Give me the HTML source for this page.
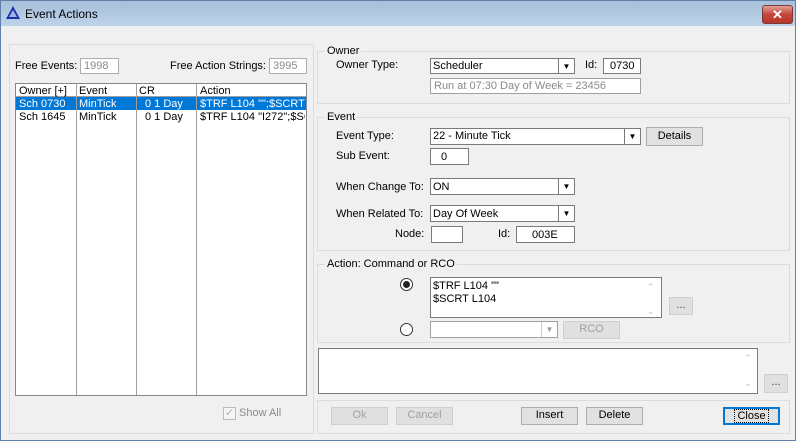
<!DOCTYPE html>
<html><head><style>
*{box-sizing:border-box;margin:0;padding:0}
body{width:800px;height:443px;background:#fbfbfb;font-family:"Liberation Sans",sans-serif;font-size:11px;color:#000;position:relative;overflow:hidden}
.a{position:absolute}
.win{left:0;top:0;width:796px;height:441px;background:#f0f0f0;border:1px solid #5e7fa8}
.title{left:1px;top:1px;width:794px;height:25px;background:linear-gradient(#a7bfdb,#bdd3ea)}
.t{white-space:nowrap;line-height:13px}
.grp{border:1px solid #dcdcdc}
.box{background:#fff;border:1px solid #7a7a7a}
.dis{color:#8a8a8a}
.btn{background:#e1e1e1;border:1px solid #adadad;text-align:center;line-height:15px}
.btnd{background:#e0e0e0;border:1px solid #cfcfcf;color:#a0a0a0;text-align:center;line-height:15px}
.arr{position:absolute;right:0;top:0;width:16px;height:100%;border-left:1px solid #7a7a7a;background:#fff;font-size:8px;text-align:center;line-height:15px}
.lbl{background:#f0f0f0;padding:0 2px}
</style></head><body>
<div class="a win"></div>
<div class="a title"></div>
<svg class="a" style="left:5px;top:5px" width="16" height="16"><polygon points="8,1 15,14 1,14" fill="#1a2fa8"/><polygon points="8,5 12,12 4,12" fill="#9fb3e6"/></svg>
<div class="a t" style="left:25px;top:8px;font-size:12px">Event Actions</div>
<div class="a" style="left:762px;top:5px;width:31px;height:19px;border:1px solid #7a3b36;border-radius:3px;background:linear-gradient(#e3a196,#c4453a 50%,#b8362c);color:#fff;text-align:center;font-weight:bold;font-size:13px;line-height:17px">✕</div>

<!-- left panel -->
<div class="a grp" style="left:9px;top:44px;width:305px;height:390px"></div>
<div class="a t" style="left:15px;top:60px">Free Events:</div>
<div class="a box dis t" style="left:80px;top:58px;width:39px;height:16px;border-color:#abadb3;padding:1px 3px">1998</div>
<div class="a t" style="left:170px;top:60px">Free Action Strings:</div>
<div class="a box dis t" style="left:269px;top:58px;width:38px;height:16px;border-color:#abadb3;padding:1px 3px">3995</div>
<div class="a box" style="left:15px;top:83px;width:292px;height:313px;border-color:#828790"></div>
<div class="a" style="left:16px;top:84px;width:290px;height:13px;border-bottom:1px solid #a0a0a0"></div>
<div class="a" style="left:16px;top:97px;width:290px;height:13px;background:#0078d7"></div>
<div class="a" style="left:76px;top:84px;width:1px;height:311px;background:#a0a0a0"></div>
<div class="a" style="left:136px;top:84px;width:1px;height:311px;background:#a0a0a0"></div>
<div class="a" style="left:196px;top:84px;width:1px;height:311px;background:#a0a0a0"></div>
<div class="a t" style="left:19px;top:85px">Owner [+]</div><div class="a t" style="left:79px;top:85px">Event</div><div class="a t" style="left:139px;top:85px">CR</div><div class="a t" style="left:200px;top:85px">Action</div>
<div class="a t" style="left:19px;top:98px;color:#fff">Sch 0730</div><div class="a t" style="left:79px;top:98px;color:#fff">MinTick</div><div class="a t" style="left:145px;top:98px;color:#fff">0 1 Day</div><div class="a t" style="left:200px;top:98px;color:#fff;width:105px;overflow:hidden">$TRF L104 "";$SCRT</div>
<div class="a t" style="left:19px;top:111px">Sch 1645</div><div class="a t" style="left:79px;top:111px">MinTick</div><div class="a t" style="left:145px;top:111px">0 1 Day</div><div class="a t" style="left:200px;top:111px;width:105px;overflow:hidden">$TRF L104 "I272";$SCRT</div>
<div class="a" style="left:223px;top:407px;width:13px;height:13px;border:1px solid #bcbcbc;background:#f5f5f5;color:#b0b0b0;font-size:11px;line-height:11px;text-align:center">✓</div>
<div class="a t dis" style="left:239px;top:407px">Show All</div>

<!-- owner -->
<div class="a grp" style="left:317px;top:51px;width:473px;height:53px"></div>
<div class="a t lbl" style="left:325px;top:45px">Owner</div>
<div class="a t" style="left:336px;top:59px">Owner Type:</div>
<div class="a box t" style="left:430px;top:58px;width:145px;height:16px;padding:1px 2px">Scheduler<div class="arr">▼</div></div>
<div class="a t" style="left:585px;top:59px">Id:</div>
<div class="a box t" style="left:603px;top:58px;width:38px;height:16px;padding:1px 0 0 6px">0730</div>
<div class="a box t dis" style="left:430px;top:78px;width:211px;height:16px;padding:1px 3px;border-color:#a0a0a0">Run at 07:30 Day of Week =  23456</div>

<!-- event -->
<div class="a grp" style="left:317px;top:117px;width:473px;height:134px"></div>
<div class="a t lbl" style="left:325px;top:111px">Event</div>
<div class="a t" style="left:336px;top:130px">Event Type:</div>
<div class="a box t" style="left:430px;top:128px;width:211px;height:17px;padding:1px 2px">22 - Minute Tick<div class="arr">▼</div></div>
<div class="a btn" style="left:646px;top:127px;width:57px;height:19px;line-height:17px">Details</div>
<div class="a t" style="left:336px;top:150px">Sub Event:</div>
<div class="a box t" style="left:430px;top:148px;width:39px;height:17px;padding:2px 0 0 10px">0</div>
<div class="a t" style="left:336px;top:181px">When Change To:</div>
<div class="a box t" style="left:430px;top:178px;width:145px;height:17px;padding:2px 2px">ON<div class="arr">▼</div></div>
<div class="a t" style="left:336px;top:208px">When Related To:</div>
<div class="a box t" style="left:430px;top:205px;width:145px;height:17px;padding:2px 2px">Day Of Week<div class="arr">▼</div></div>
<div class="a t" style="left:395px;top:228px">Node:</div>
<div class="a box" style="left:431px;top:226px;width:32px;height:17px"></div>
<div class="a t" style="left:498px;top:228px">Id:</div>
<div class="a box t" style="left:516px;top:226px;width:59px;height:17px;padding:2px 0 0 15px">003E</div>

<!-- action -->
<div class="a grp" style="left:317px;top:264px;width:473px;height:79px"></div>
<div class="a t lbl" style="left:325px;top:258px">Action: Command or RCO</div>
<div class="a" style="left:400px;top:278px;width:13px;height:13px;border:1px solid #333;border-radius:50%;background:#fff"></div>
<div class="a" style="left:403px;top:281px;width:7px;height:7px;border-radius:50%;background:#222"></div>
<div class="a box t" style="left:430px;top:277px;width:232px;height:41px;padding:2px 2px">$TRF L104 ""<br>$SCRT L104</div>
<div class="a t" style="left:647px;top:281px;color:#c0c0c0;font-size:9px">⌃</div>
<div class="a t" style="left:647px;top:305px;color:#c0c0c0;font-size:9px">⌄</div>
<div class="a btnd" style="left:669px;top:297px;width:24px;height:18px;color:#444">...</div>
<div class="a" style="left:400px;top:323px;width:13px;height:13px;border:1px solid #333;border-radius:50%;background:#fff"></div>
<div class="a box" style="left:430px;top:321px;width:128px;height:17px;border-color:#a0a0a0"><div class="arr" style="color:#999;border-color:#ccc">▼</div></div>
<div class="a btnd" style="left:563px;top:321px;width:57px;height:18px">RCO</div>

<div class="a box" style="left:318px;top:348px;width:440px;height:46px"></div>
<div class="a t" style="left:744px;top:352px;color:#c0c0c0;font-size:9px">⌃</div>
<div class="a t" style="left:744px;top:377px;color:#c0c0c0;font-size:9px">⌄</div>
<div class="a btnd" style="left:764px;top:374px;width:24px;height:19px;color:#444">...</div>

<!-- bottom -->
<div class="a grp" style="left:317px;top:400px;width:473px;height:34px"></div>
<div class="a btnd" style="left:331px;top:407px;width:57px;height:18px">Ok</div>
<div class="a btnd" style="left:396px;top:407px;width:57px;height:18px">Cancel</div>
<div class="a btn" style="left:521px;top:407px;width:57px;height:18px">Insert</div>
<div class="a btn" style="left:586px;top:407px;width:57px;height:18px">Delete</div>
<div class="a btn" style="left:723px;top:407px;width:57px;height:18px;border:2px solid #0078d7;line-height:14px"><span style="outline:1px dotted #000;padding:0 2px">Close</span></div>
</body></html>
